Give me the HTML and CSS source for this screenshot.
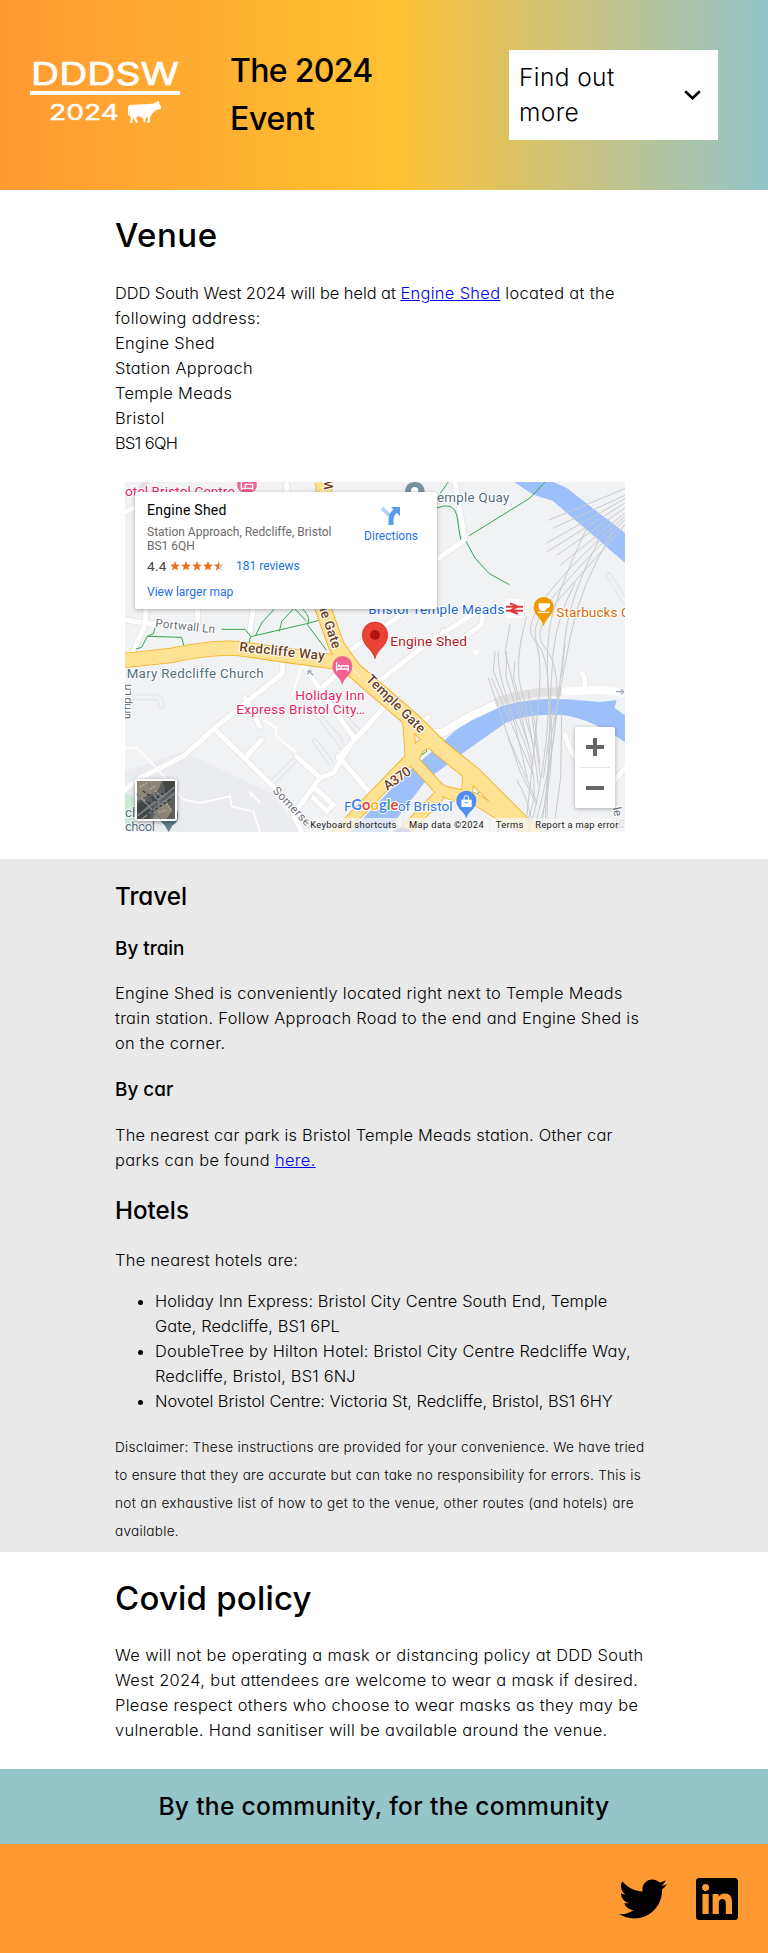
FILE: index.html
```html
<!DOCTYPE html>
<html lang="en">
<head>
<meta charset="utf-8">
<title>DDD South West 2024 - Venue</title>
<link rel="stylesheet" href="styles.css">
</head>
<body>
<header class="site-header">
  <svg class="logo" viewBox="0 0 150 66" width="150" height="66" role="img" aria-label="DDDSW 2024">
    <g fill="#fff" stroke="#fff" font-family="Inter, sans-serif">
      <text x="1" y="24" font-size="31.5" font-weight="400" stroke-width=".7" textLength="148" lengthAdjust="spacingAndGlyphs">DDDSW</text>
      <rect x="0" y="30" width="150" height="4" stroke="none"/>
      <text x="19" y="59" font-size="21" font-weight="400" stroke-width=".4" textLength="70" lengthAdjust="spacingAndGlyphs">2024</text>
    </g>
    <path fill="#fff" d="M99 44 L119 43 L124 42.5 L126 41 L123 40.500 L126 41 L129 40 L129 41.500 L131 46 L131 48 L126 49 L122 53 L120 56 L120 61 L118 62 L117 62 L118 57 L116 56 L115 61 L114 62 L113 57 L108 55 L106 57 L108 61 L106 62 L103 56 L102 62 L100 62 L101 57 L99.500 54 L99.500 46 L99 55 L98 54 L98 46Z"/>
  </svg>
  <h1 class="event-title">The 2024<br><span class="ls-0">Event</span></h1>
  <button class="menu" type="button">
    <span class="menu-label">Find out<br>more</span>
    <svg width="17" height="11" viewBox="0 0 17 11"><path d="M1.200 1.200 8.500 8.300 15.800 1.200" fill="none" stroke="#000" stroke-width="2.600"/></svg>
  </button>
</header>

<main>
  <section class="section venue">
    <h1 class="h1-venue">Venue</h1>
    <p><span class="ls-13">DDD South West 2024 will be held at </span><span class="ls-50"><a href="#">Engine Shed</a> located at the</span><br>
      <span class="ls-50">following address:</span><br>
      <span class="ls-50">Engine Shed<br>Station Approach<br>Temple Meads<br>Bristol</span><br>
      <span class="ls-neg">BS1 6QH</span></p>
    <div class="map">
      <svg class="map-canvas" viewBox="15 12 1500 1050" width="500" height="350">
        <rect x="15" y="12" width="1500" height="1050" fill="#f1f2f4"/>
        <path fill="#e8eaed" d="M15 1062V880L190 820 460 950 540 1062zM195 965l95 10 110-15 60 20 90 82H215z" opacity=".7"/>
        <path fill="#ceead6" d="M15 945l45 20-10 70-35 27z"/>
        <!-- river -->
        <path fill="#9dc0fb" d="M1182 12 1240 50 1298 68 1515 254V165L1340 30 1300 12zM690 1062 860 885 960 800Q1060 700 1160 680 1240 660 1340 664L1440 672 1490 666 1484 690 1515 712V793Q1420 725 1330 711 1220 705 1155 736L1050 810 920 905 800 1062z"/>
        <!-- small grey-edged streets -->
        <g fill="none" stroke="#dcdfe3" stroke-width="17" stroke-linejoin="round" stroke-linecap="round">
          <path d="M35 658h78q14 8 10 25M600 640l115 120M575 690l85 95M610 730l60 80M585 790l45 60M550 690l45-45M460 910 530 840M1466 292l60 95"/>
        </g>
        <g fill="none" stroke="#f1f2f4" stroke-width="12" stroke-linejoin="round" stroke-linecap="round">
          <path d="M35 658h78q14 8 10 25M600 640l115 120M575 690l85 95M610 730l60 80M585 790l45 60M550 690l45-45M460 910 530 840M1466 292l60 95"/>
        </g>
        <!-- minor streets -->
        <g fill="none" stroke="#dfe2e6" stroke-width="19" stroke-linejoin="round" stroke-linecap="round">
          <path d="M15 100 60 85M40 520 75 440 78 390M15 425 105 440M233 435V390M390 460 400 390M488 540V585L290 745 190 835 60 900 15 935M290 760 480 945M375 840 425 785M375 660 420 745M545 555 705 785M600 635 660 580M655 840 790 690M655 835 750 945M530 835 600 900 640 885 700 785M545 1062 520 1010 600 900M580 960 620 1000 640 980 590 935M685 520 745 480 870 390M770 615 930 490 1080 395M970 460 1000 500M1090 390 1085 440 1030 480M500 20 500 40M1005 12 1035 185 950 245M1385 585q15 20 8 50M1335 770q20 70 55 90M1515 870 1440 960M905 740 925 718M60 40 75 12"/>
        </g>
        <g fill="none" stroke="#fff" stroke-width="15" stroke-linejoin="round" stroke-linecap="round">
          <path d="M15 100 60 85M40 520 75 440 78 390M15 425 105 440M233 435V390M390 460 400 390M488 540V585L290 745 190 835 60 900 15 935M290 760 480 945M375 840 425 785M375 660 420 745M545 555 705 785M600 635 660 580M655 840 790 690M655 835 750 945M530 835 600 900 640 885 700 785M545 1062 520 1010 600 900M580 960 620 1000 640 980 590 935M685 520 745 480 870 390M770 615 930 490 1080 395M970 460 1000 500M1090 390 1085 440 1030 480M500 20 500 40M1005 12 1035 185 950 245M1385 585q15 20 8 50M1335 770q20 70 55 90M1515 870 1440 960M905 740 925 718"/>
        </g>
        <g fill="none" stroke="#fff" stroke-width="5">
          <path d="M420 720 470 750 465 770 530 825M15 810 50 810 110 870 190 965 240 975 330 955 335 985 400 1000 420 1062M395 960 390 940 420 975M515 660l30-100"/>
        </g>
        <path d="M930 765H965L1050 715 1135 675" fill="none" stroke="#dcdfe3" stroke-width="28"/>
        <path d="M930 765H965L1050 715 1135 675M1325 641 1440 636 1515 645" fill="none" stroke="#fff" stroke-width="24"/>
        <path d="M1125 674Q1220 638 1325 641" fill="none" stroke="#e1e1e1" stroke-width="26"/>
        <!-- railway -->
        <g fill="none" stroke="#c8cacd" stroke-width="3">
          <path d="M1515 32 1285 127M1515 52 1300 150M1515 62 1280 195M1515 75 1280 222M1515 90 1310 232M1515 105 1320 262M1515 115Q1370 240 1290 340T1240 480 1255 680 1215 1062M1515 125Q1390 250 1305 350T1255 500 1285 700 1230 1062M1515 140Q1410 260 1320 360T1275 510 1310 700 1240 1062M1400 150Q1330 300 1300 400T1290 700 1250 1062M1440 180Q1350 350 1335 480T1310 700 1262 1062M1480 160Q1380 320 1350 480T1300 740 1275 1062M1365 315Q1310 420 1300 520T1280 1062M1125 520 1120 580 1185 740 1222 900M1135 520Q1130 600 1200 760T1225 1020M1160 520 1158 600 1225 800M1170 440 1155 520 1175 600 1240 860M1185 550 1180 600 1240 800M1220 415Q1180 560 1205 640T1255 920M1105 600 1200 880 1250 980M1115 600 1240 890M1165 780 1250 970M1190 905Q1230 970 1240 1062M1335 500 1325 595M1325 700 1322 900 1300 1062M1240 700 1260 860M1300 690 1270 900M1225 640 1262 900"/>
        </g>
        <!-- footpaths -->
        <g fill="none" stroke="#34a853" stroke-width="3">
          <path d="M305 454H375L392 475 385 502M392 476 560 437 597 427M407 472 425 435 462 394M478 460 485 430 520 393M525 393 560 430M548 393Q575 420 562 440L620 517M48 513 65 508 82 475 100 467 105 450M82 475 185 478 192 505M1275 12 1230 60 1048 173M1038 190 1065 240 1108 287 1168 320M950 90Q1000 70 1010 110L1022 185M960 47 985 12M890 842 920 820 918 802 905 770M1065 955 1080 940M1130 1062 1165 1035"/>
        </g>
        <!-- main roads -->
        <g fill="none" stroke="#f5ae20" stroke-linejoin="round">
          <path stroke-width="46" d="M15 547 150 533Q290 505 360 512L520 535 670 555"/>
          <path stroke-width="50" d="M600 0 612 12 605 380 650 505 700 575 880 730 960 810 1060 890 1250 1080"/>
          <path stroke-width="36" d="M865 730 872 840M640 1080 872 840 960 935 1010 955M880 850Q890 790 940 795L970 810M950 935 1060 960 1180 1035M835 1080 960 950M1040 960 1045 890"/>
        </g>
        <g fill="none" stroke="#fde293" stroke-linejoin="round">
          <path stroke-width="41" d="M15 547 150 533Q290 505 360 512L520 535 670 555"/>
          <path stroke-width="45" d="M600 0 612 12 605 380 650 505 700 575 880 730 960 810 1060 890 1250 1080"/>
          <path stroke-width="31" d="M865 730 872 840M640 1080 872 840 960 935 1010 955M880 850Q890 790 940 795L970 810M950 935 1060 960 1180 1035M835 1080 960 950M1040 960 1045 890"/>
        </g>
        <path d="M690 565 722 598" stroke="#fff" stroke-width="3" stroke-dasharray="12 5"/>
        <!-- labels -->
        <g class="map-labels">
          <g fill="#6b4022" font-weight="500" font-size="40">
            <text transform="translate(357 520) rotate(6)" textLength="257">Redcliffe Way</text>
            <text transform="translate(736 606) rotate(44.500)" textLength="230">Temple Gate</text>
            <text transform="translate(590 372) rotate(71)" textLength="150">ple Gate</text>
            <text transform="translate(802 938) rotate(-35)" textLength="90">A370</text>
            <text transform="translate(638 35) rotate(-90)">W</text>
          </g>
          <g fill="#6b7178" font-size="35">
            <text transform="translate(105 447) rotate(6)" textLength="180">Portwall Ln</text>
            <text transform="translate(456 940) rotate(46)" textLength="160">Somerset</text>
            <text transform="translate(30 724) rotate(-88)" textLength="106">ump Ln</text>
            <text transform="translate(1478 990) rotate(78)">le St</text>
          </g>
          <g fill="#546e7a" font-size="40">
            <text x="20" y="599" textLength="411">Mary Redcliffe Church</text>
            <text x="928" y="72" textLength="240">Temple Quay</text>
            <text x="15" y="1018">cl</text>
            <text x="15" y="1060" textLength="90">chool</text>
          </g>
          <g fill="#e91e63" font-size="41">
            <text x="15" y="53" textLength="329">otel Bristol Centre</text>
            <text x="526" y="666" textLength="208">Holiday Inn</text>
            <text x="349" y="708" textLength="386">Express Bristol City…</text>
          </g>
          <g fill="#1967d2" font-size="41">
            <text x="745" y="407" textLength="408">Bristol Temple Meads</text>
            <text x="673" y="998" fill="#2b73e0">F</text>
            <text x="833" y="998" fill="#2b73e0" textLength="165">of Bristol</text>
          </g>
          <text x="811" y="503" fill="#b3161b" font-size="41" textLength="230">Engine Shed</text>
          <text x="1309" y="417" fill="#d56e0c" font-size="41" textLength="221">Starbucks C</text>
        </g>
        <!-- pins -->
        <path fill="#ea4335" stroke="#c5221f" stroke-width="2" d="M765 542C758 512 727 505 727 470a38 38 0 0 1 76 0c0 35-31 42-38 72z"/>
        <circle cx="765" cy="471" r="15" fill="#b31412"/>
        <path fill="#f06292" d="M667 621C661 596 637 592 637 564a30 30 0 0 1 60 0c0 28-24 32-30 57z"/>
        <path fill="none" stroke="#fff" stroke-width="4" d="M650 552v28M650 573h35v7M685 573v-9h-22v9"/><circle cx="657" cy="563" r="3.500" fill="#fff"/>
        <path fill="#f06292" d="M352 12h58v15q-4 18-28 18t-30-18z"/>
        <path fill="none" stroke="#fff" stroke-width="4" d="M364 12v25M364 31h34v6M398 31V19h-22v12"/>
        <path fill="#78909c" d="M855 42q2-30 28-30h4q26 2 27 30z"/><circle cx="884" cy="38" r="11" fill="#fff"/>
        <path fill="#f29900" d="M1271 445C1265 418 1241 413 1241 387a30 30 0 0 1 60 0c0 26-24 31-30 58z"/>
        <path fill="#fff" d="M1256 376h34v8q-2 7-10 7-1 8-10 8-14 0-14-12zM1254 401h34v4h-34z"/>
        <path fill="#4f8df5" d="M1039 1021C1033 998 1009 994 1009 968a30 30 0 0 1 60 0c0 26-24 30-30 53z"/>
        <path fill="#fff" d="M1024 965h31v22h-31z"/><path d="M1032 966v-6a7 7 0 0 1 14 0v6" fill="none" stroke="#fff" stroke-width="3"/><path d="M1034 972q5 7 11 0" fill="none" stroke="#4f8df5" stroke-width="3"/>
        <path fill="#607d8b" d="M118 1026Q150 1035 172 995 180 1030 158 1042L146 1062 134 1042z"/>
        <rect x="1155" y="364" width="57" height="56" rx="12" fill="#fff"/>
        <path fill="none" stroke="#e1393b" stroke-width="6" d="M1158 386h51M1158 398h51M1170 376l24 10-24 12 24 10"/>
        <path d="M580 592 566 580M564 590v-11h11M1488 641h22M1503 634l8 7-8 7" stroke="#9aa6b8" stroke-width="4" fill="none"/>
        <path d="M1055 520 1080 515 1068 532" fill="#fff"/>
        <text class="google" x="694" y="995" font-size="44" textLength="141"><tspan fill="#4285f4">G</tspan><tspan fill="#ea4335">o</tspan><tspan fill="#fbbc04">o</tspan><tspan fill="#4285f4">g</tspan><tspan fill="#34a853">l</tspan><tspan fill="#ea4335">e</tspan></text>
        <path d="M818 1062q10-13 33-12 18 2 22 12z" fill="#7c86c8"/>
        <!-- attribution strip -->
        <path fill="#f5f5f5" fill-opacity=".75" d="M563 1020h952v42H563z"/>
        <path d="M849 1020v42M1109 1020v42M1228 1020v42" stroke="#e2e2e2" stroke-width="2"/>
        <g fill="#222" font-size="28" font-family="Roboto, sans-serif">
          <text x="571" y="1050" textLength="258">Keyboard shortcuts</text>
          <text x="867" y="1050" textLength="224">Map data ©2024</text>
          <text x="1127" y="1050" textLength="83">Terms</text>
          <text x="1246" y="1050" textLength="249">Report a map error</text>
        </g>
      </svg>
      <div class="place-card">
        <div class="place-info">
          <div class="place-name">Engine Shed</div>
          <div class="place-address">Station Approach, Redcliffe, Bristol<br>BS1 6QH</div>
          <div class="rating">
            <span class="score">4.4</span>
            <svg width="55" height="10" viewBox="0 0 55 10">
              <defs><path id="star" d="M5 0 6.300 3.500 10 3.700 7.100 6 8.100 9.600 5 7.600 1.900 9.600 2.900 6 0 3.700 3.700 3.500z"/></defs>
              <g fill="#e7711b"><use href="#star"/><use href="#star" x="11"/><use href="#star" x="22"/><use href="#star" x="33"/></g>
              <use href="#star" x="44" fill="#c9c9c9"/>
              <path fill="#e7711b" d="M49 0V7.600L45.900 9.600 46.900 6 44 3.700 47.700 3.500z"/>
            </svg>
            <span class="reviews">181 reviews</span>
          </div>
          <div class="larger">View larger map</div>
        </div>
        <div class="directions">
          <svg width="20" height="20" viewBox="0 0 20 20"><path d="M1 2 8.500 9.500" stroke="#b5d2f8" stroke-width="4" fill="none"/><path d="M10 19V13Q10 9 15 4" stroke="#5b9be8" stroke-width="5" fill="none"/><path d="M10 1h9v9z" fill="#5b9be8"/></svg>
          <span>Directions</span>
        </div>
      </div>
      <svg class="satellite" width="42" height="42" viewBox="0 0 42 42">
        <rect width="42" height="42" rx="2" fill="#fff"/>
        <rect x="2" y="2" width="38" height="38" fill="#5d5f5c"/>
        <path fill="#8d8577" d="M2 2h25l-4 9-9 5-12 6zM22 27l10-3 5 8-6 8H18z"/>
        <path fill="#434940" d="M2 26l8-6 8 8-4 12H2zM28 2h12v10l-9 3z"/>
        <path d="M2 37 40 8M7 40 40 14M2 15 26 40M13 5 26 27" stroke="#787d8c" stroke-width="2"/>
        <path d="M5 8 12 4M15 10l6-3M24 33l8-2M30 22l7 10M6 19l5 3M20 12l8 6" stroke="#b5a996" stroke-width="1.500" stroke-dasharray="2 1"/>
        <path d="M5 30 35 10M12 36 36 20M8 12 22 22" stroke="#343b3a" stroke-width="1.500" stroke-dasharray="3 2"/>
      </svg>
      <div class="zoom-control">
        <svg width="40" height="81" viewBox="0 0 40 81"><path d="M11 20h18M20 11v18M11 61h18" stroke="#666" stroke-width="4"/><path d="M5 40.500h30" stroke="#e6e6e6"/></svg>
      </div>
    </div>
  </section>

  <section class="section travel">
    <h2>Travel</h2>
    <h3>By train</h3>
    <p class="train-text ls-48">Engine Shed is conveniently located right next to Temple Meads<br>train station. Follow Approach Road to the end and Engine Shed is<br>on the corner.</p>
    <h3 class="car-title">By car</h3>
    <p class="car-text ls-40">The nearest car park is Bristol Temple Meads station. Other car<br><span class="ls-50">parks can be found <a href="#">here.</a></span></p>
    <h2>Hotels</h2>
    <p class="hotel-text ls-48">The nearest hotels are:</p>
    <ul>
      <li class="ls-28">Holiday Inn Express: Bristol City Centre South End, Temple<br><span class="ls-28">Gate, Redcliffe, BS1 6PL</span></li>
      <li class="ls-35">DoubleTree by Hilton Hotel: Bristol City Centre Redcliffe Way,<br><span class="ls-35">Redcliffe, Bristol, BS1 6NJ</span></li>
      <li class="ls-13">Novotel Bristol Centre: Victoria St, Redcliffe, Bristol, BS1 6HY</li>
    </ul>
    <p class="disclaimer">Disclaimer: These instructions are provided for your convenience. We have tried<br>to ensure that they are accurate but can take no responsibility for errors. This is<br><span class="disclaimer-wide">not an exhaustive list of how to get to the venue, other routes (and hotels) are</span><br>available.</p>
  </section>

  <section class="section covid">
    <h1 class="h1-covid">Covid policy</h1>
    <p class="ls-50">We will not be operating a mask or distancing policy at DDD South<br>West 2024, but attendees are welcome to wear a mask if desired.<br>Please respect others who choose to wear masks as they may be<br>vulnerable. Hand sanitiser will be available around the venue.</p>
  </section>
</main>

<div class="tagline">By the community, for the community</div>
<footer class="site-footer">
  <svg width="48" height="48" viewBox="0 0 512 512"><path d="M459.370 151.716c.325 4.548.325 9.097.325 13.645 0 138.720-105.583 298.558-298.558 298.558-59.452 0-114.680-17.219-161.137-47.106 8.447.974 16.568 1.299 25.340 1.299 49.055 0 94.213-16.568 130.274-44.832-46.132-.975-84.792-31.188-98.112-72.772 6.498.974 12.995 1.624 19.818 1.624 9.421 0 18.843-1.300 27.614-3.573-48.081-9.747-84.143-51.980-84.143-102.985v-1.299c13.969 7.797 30.214 12.670 47.431 13.319-28.264-18.843-46.781-51.005-46.781-87.391 0-19.492 5.197-37.360 14.294-52.954 51.655 63.675 129.300 105.258 216.365 109.807-1.624-7.797-2.599-15.918-2.599-24.040 0-57.828 46.782-104.934 104.934-104.934 30.213 0 57.502 12.670 76.670 33.137 23.715-4.548 46.456-13.320 66.599-25.340-7.798 24.366-24.366 44.833-46.132 57.827 21.117-2.273 41.584-8.122 60.426-16.243-14.292 20.791-32.161 39.308-52.628 54.253z"/></svg>
  <svg width="42" height="48" viewBox="0 0 448 512"><path d="M416 32H31.900C14.300 32 0 46.500 0 64.300v383.400C0 465.500 14.300 480 31.900 480H416c17.600 0 32-14.500 32-32.300V64.300c0-17.800-14.400-32.300-32-32.300zM135.400 416H69V202.200h66.500V416zm-33.200-243c-21.300 0-38.500-17.300-38.500-38.500S80.900 96 102.200 96c21.200 0 38.500 17.300 38.500 38.500 0 21.300-17.200 38.500-38.500 38.500zm282.100 243h-66.400V312c0-24.800-.5-56.700-34.500-56.700-34.600 0-39.900 27-39.900 54.900V416h-66.400V202.200h63.700v29.200h.9c8.900-16.800 30.600-34.500 62.900-34.500 67.200 0 79.700 44.300 79.700 101.900V416z"/></svg>
</footer>
</body>
</html>
```
FILE: styles.css
```css
* { box-sizing: border-box; }
body {
  margin: 0;
  background: #fff;
  color: #000;
  font: 350 16.4px/25px Inter, sans-serif;
  font-feature-settings: "cv11";
}
h1, h2, h3, p, ul { margin: 0; }
h1, h2, h3 { font-weight: 500; }
h1 { font-size: 33px; line-height: 48px; }
h2 { font-size: 24.2px; line-height: 36px; margin-top: 20px; }
h3 { font-size: 18.9px; line-height: 28px; margin-top: 20px; }
a { color: #0000ee; }

.ls-0 { letter-spacing: -0.3px; }
.ls-neg { letter-spacing: -0.6px; }
.ls-13 { letter-spacing: -0.03px; }
.ls-28 { letter-spacing: 0.1px; }
.ls-35 { letter-spacing: 0.19px; }
.ls-40 { letter-spacing: 0.22px; }
.ls-48 { letter-spacing: 0.3px; }
.ls-50 { letter-spacing: 0.34px; }

.site-header {
  height: 190px;
  padding: 0 50px 0 30px;
  display: flex;
  align-items: center;
  background: linear-gradient(90deg, #ff9931 0%, #ffc132 51%, #94c5ca 100%);
}
.logo { margin: -3px 50px 0 0; flex: none; overflow: visible; }
.event-title { font-size: 32px; letter-spacing: -0.7px; white-space: nowrap; }
.menu {
  width: 209px;
  height: 90px;
  margin-left: auto;
  padding: 10px 17px 10px 10px;
  display: flex;
  align-items: center;
  justify-content: space-between;
  border: 0;
  background: #fff;
  color: #000;
  font: inherit;
  font-size: 24.5px;
  line-height: 35px;
  letter-spacing: 0.4px;
  text-align: left;
}

.section { padding: 0 115px; white-space: nowrap; }
.venue { padding-top: 21px; height: 669px; }
.h1-venue { margin-bottom: 22px; letter-spacing: 0.5px; }
.travel { padding-top: 20px; height: 693px; background: #e9e9e9; }
.travel h2:first-child { margin-top: 0; }
.train-text { margin-top: 18px; }
.travel .car-title { margin-top: 20px; }
.car-text { margin-top: 19px; }
.hotel-text { margin-top: 19px; }
.travel ul { margin-top: 16px; padding-left: 40px; }
.disclaimer { margin-top: 19px; font-size: 13.6px; line-height: 28px; letter-spacing: 0.27px; }
.disclaimer-wide { letter-spacing: 0.35px; }
.covid { padding-top: 22px; height: 217px; }
.h1-covid { margin-bottom: 21px; letter-spacing: 0.2px; }

.tagline {
  height: 75px;
  background: #95c5c9;
  text-align: center;
  font-size: 24.6px;
  font-weight: 500;
  line-height: 75px;
  letter-spacing: 0.3px;
}
.site-footer {
  height: 109px;
  padding-right: 30px;
  display: flex;
  align-items: center;
  justify-content: flex-end;
  gap: 29px;
  background: #ff9931;
}

/* Map embed */
.map {
  position: relative;
  width: 500px;
  height: 350px;
  margin: 26px 0 0 10px;
  overflow: hidden;
  font-family: Roboto, sans-serif;
  font-weight: 400;
  letter-spacing: 0;
}
.map-canvas { display: block; font-family: Roboto, sans-serif; }
.map-labels text, .google { paint-order: stroke; stroke: #fff; stroke-width: 6px; stroke-linejoin: round; }
.google { font-family: Lato, sans-serif; font-weight: 700; }
.place-card {
  position: absolute;
  left: 10px;
  top: 10px;
  width: 302px;
  height: 117px;
  padding: 9px 19px 0 12px;
  display: flex;
  justify-content: space-between;
  background: #fff;
  border-radius: 2px;
  box-shadow: 0 1px 4px rgba(0, 0, 0, .3);
  font-size: 12px;
  line-height: 14px;
}
.place-name { font-size: 14px; line-height: 18px; font-weight: 400; letter-spacing: .25px; }
.place-address { margin-top: 6px; color: #6b6b6b; }
.rating { margin-top: 5px; display: flex; align-items: center; line-height: 16px; }
.score { width: 23px; font-size: 13.5px; color: #444; letter-spacing: .3px; }
.reviews { margin-left: 11px; color: #1a73e8; }
.larger { margin-top: 10px; color: #1a73e8; line-height: 16px; }
.directions {
  padding-top: 5px;
  display: flex;
  flex-direction: column;
  align-items: center;
  gap: 3px;
  color: #1a73e8;
}
.satellite { position: absolute; left: 10px; top: 297px; filter: drop-shadow(0 1px 2px rgba(0, 0, 0, .4)); }
.zoom-control {
  position: absolute;
  left: 450px;
  top: 245px;
  width: 40px;
  height: 81px;
  background: #fff;
  border-radius: 2px;
  box-shadow: 0 1px 4px rgba(0, 0, 0, .3);
}
```
